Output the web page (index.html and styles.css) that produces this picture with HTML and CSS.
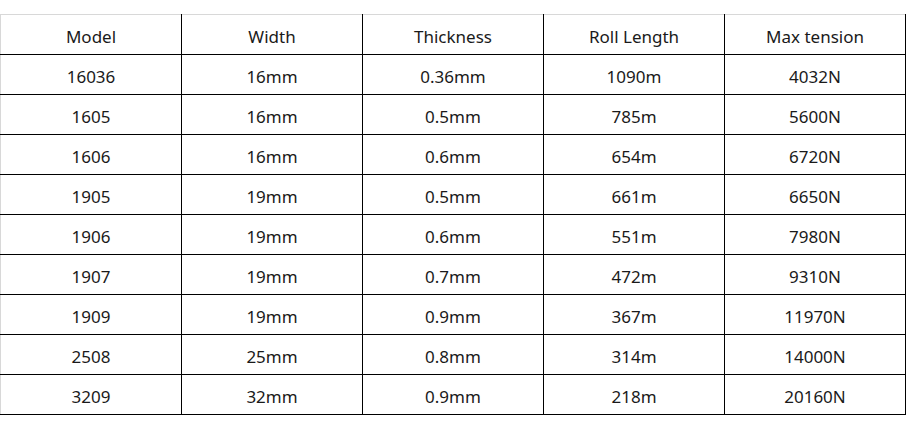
FILE: index.html
```html
<!DOCTYPE html>
<html>
<head>
<meta charset="utf-8">
<link rel="stylesheet" href="styles.css">
</head>
<body>
<div class="wrap">
<table class="spec">
<colgroup><col><col><col><col><col></colgroup>
<tr><td>Model</td><td>Width</td><td>Thickness</td><td>Roll Length</td><td>Max tension</td></tr>
<tr><td>16036</td><td>16mm</td><td>0.36mm</td><td>1090m</td><td>4032N</td></tr>
<tr><td>1605</td><td>16mm</td><td>0.5mm</td><td>785m</td><td>5600N</td></tr>
<tr><td>1606</td><td>16mm</td><td>0.6mm</td><td>654m</td><td>6720N</td></tr>
<tr><td>1905</td><td>19mm</td><td>0.5mm</td><td>661m</td><td>6650N</td></tr>
<tr><td>1906</td><td>19mm</td><td>0.6mm</td><td>551m</td><td>7980N</td></tr>
<tr><td>1907</td><td>19mm</td><td>0.7mm</td><td>472m</td><td>9310N</td></tr>
<tr><td>1909</td><td>19mm</td><td>0.9mm</td><td>367m</td><td>11970N</td></tr>
<tr><td>2508</td><td>25mm</td><td>0.8mm</td><td>314m</td><td>14000N</td></tr>
<tr><td>3209</td><td>32mm</td><td>0.9mm</td><td>218m</td><td>20160N</td></tr>
</table>
</div>
</body>
</html>
```

FILE: styles.css
```css
html, body { margin: 0; padding: 0; background: #fff; }
.wrap { padding-top: 14px; }
.spec {
  border-collapse: collapse;
  table-layout: fixed;
  width: 906px;
  font-family: "Noto Sans", "Open Sans", sans-serif;
  font-size: 17px;
  color: #1a1a1a;
}
.spec col { width: 181px; }
.spec td {
  border: 1px solid #000;
  height: 40px;
  padding: 3px 0 0 0;
  text-align: center;
  vertical-align: middle;
  box-sizing: border-box;
}
.spec tr:first-child td { border-top-color: #d8d8d8; }
.spec td:first-child { border-left-color: #d8d8d8; }
```
